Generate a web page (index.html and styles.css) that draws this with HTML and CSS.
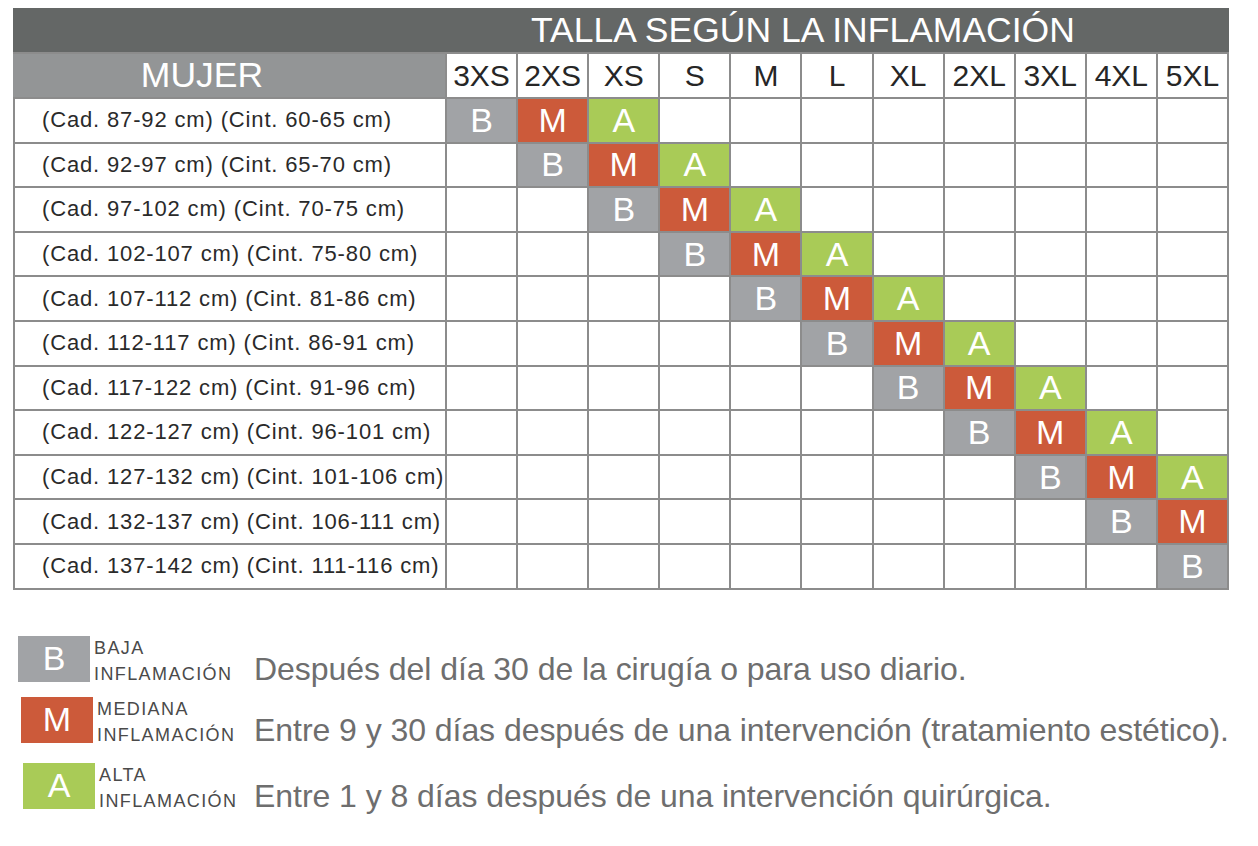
FILE: index.html
```html
<!DOCTYPE html>
<html lang="es">
<head>
<meta charset="utf-8">
<title>Talla según la inflamación</title>
<link rel="stylesheet" href="styles.css">
</head>
<body>
<div class="chart">
  <div class="title">TALLA SEGÚN LA INFLAMACIÓN</div>
  <div class="mujer">MUJER</div>
  <div class="size">3XS</div><div class="size">2XS</div><div class="size">XS</div><div class="size">S</div><div class="size">M</div><div class="size">L</div><div class="size">XL</div><div class="size">2XL</div><div class="size">3XL</div><div class="size">4XL</div><div class="size">5XL</div>

  <div class="label">(Cad. 87-92 cm) (Cint. 60-65 cm)</div>
  <div class="cell b">B</div><div class="cell m">M</div><div class="cell a">A</div><div class="cell"></div><div class="cell"></div><div class="cell"></div><div class="cell"></div><div class="cell"></div><div class="cell"></div><div class="cell"></div><div class="cell"></div>

  <div class="label">(Cad. 92-97 cm) (Cint. 65-70 cm)</div>
  <div class="cell"></div><div class="cell b">B</div><div class="cell m">M</div><div class="cell a">A</div><div class="cell"></div><div class="cell"></div><div class="cell"></div><div class="cell"></div><div class="cell"></div><div class="cell"></div><div class="cell"></div>

  <div class="label">(Cad. 97-102 cm) (Cint. 70-75 cm)</div>
  <div class="cell"></div><div class="cell"></div><div class="cell b">B</div><div class="cell m">M</div><div class="cell a">A</div><div class="cell"></div><div class="cell"></div><div class="cell"></div><div class="cell"></div><div class="cell"></div><div class="cell"></div>

  <div class="label">(Cad. 102-107 cm) (Cint. 75-80 cm)</div>
  <div class="cell"></div><div class="cell"></div><div class="cell"></div><div class="cell b">B</div><div class="cell m">M</div><div class="cell a">A</div><div class="cell"></div><div class="cell"></div><div class="cell"></div><div class="cell"></div><div class="cell"></div>

  <div class="label">(Cad. 107-112 cm) (Cint. 81-86 cm)</div>
  <div class="cell"></div><div class="cell"></div><div class="cell"></div><div class="cell"></div><div class="cell b">B</div><div class="cell m">M</div><div class="cell a">A</div><div class="cell"></div><div class="cell"></div><div class="cell"></div><div class="cell"></div>

  <div class="label">(Cad. 112-117 cm) (Cint. 86-91 cm)</div>
  <div class="cell"></div><div class="cell"></div><div class="cell"></div><div class="cell"></div><div class="cell"></div><div class="cell b">B</div><div class="cell m">M</div><div class="cell a">A</div><div class="cell"></div><div class="cell"></div><div class="cell"></div>

  <div class="label">(Cad. 117-122 cm) (Cint. 91-96 cm)</div>
  <div class="cell"></div><div class="cell"></div><div class="cell"></div><div class="cell"></div><div class="cell"></div><div class="cell"></div><div class="cell b">B</div><div class="cell m">M</div><div class="cell a">A</div><div class="cell"></div><div class="cell"></div>

  <div class="label">(Cad. 122-127 cm) (Cint. 96-101 cm)</div>
  <div class="cell"></div><div class="cell"></div><div class="cell"></div><div class="cell"></div><div class="cell"></div><div class="cell"></div><div class="cell"></div><div class="cell b">B</div><div class="cell m">M</div><div class="cell a">A</div><div class="cell"></div>

  <div class="label">(Cad. 127-132 cm) (Cint. 101-106 cm)</div>
  <div class="cell"></div><div class="cell"></div><div class="cell"></div><div class="cell"></div><div class="cell"></div><div class="cell"></div><div class="cell"></div><div class="cell"></div><div class="cell b">B</div><div class="cell m">M</div><div class="cell a">A</div>

  <div class="label">(Cad. 132-137 cm) (Cint. 106-111 cm)</div>
  <div class="cell"></div><div class="cell"></div><div class="cell"></div><div class="cell"></div><div class="cell"></div><div class="cell"></div><div class="cell"></div><div class="cell"></div><div class="cell"></div><div class="cell b">B</div><div class="cell m">M</div>

  <div class="label">(Cad. 137-142 cm) (Cint. 111-116 cm)</div>
  <div class="cell"></div><div class="cell"></div><div class="cell"></div><div class="cell"></div><div class="cell"></div><div class="cell"></div><div class="cell"></div><div class="cell"></div><div class="cell"></div><div class="cell"></div><div class="cell b">B</div>
</div>

<div class="legend">
  <div class="item item-b">
    <div class="swatch b">B</div>
    <div class="kind"><span class="k1">BAJA</span><span class="k2">INFLAMACIÓN</span></div>
    <div class="desc">Después del día 30 de la cirugía o para uso diario.</div>
  </div>
  <div class="item item-m">
    <div class="swatch m">M</div>
    <div class="kind"><span class="k1">MEDIANA</span><span class="k2">INFLAMACIÓN</span></div>
    <div class="desc">Entre 9 y 30 días después de una intervención (tratamiento estético).</div>
  </div>
  <div class="item item-a">
    <div class="swatch a">A</div>
    <div class="kind"><span class="k1">ALTA</span><span class="k2">INFLAMACIÓN</span></div>
    <div class="desc">Entre 1 y 8 días después de una intervención quirúrgica.</div>
  </div>
</div>
</body>
</html>
```

FILE: styles.css
```css
* { box-sizing: border-box; }

body {
  margin: 0;
  padding: 8px 0 40px 13px;
  background: #ffffff;
  font-family: "Liberation Sans", Arial, Helvetica, sans-serif;
  color: #2b2b2b;
}

.chart {
  width: 1216px;
  display: grid;
  grid-template-columns: 430px repeat(11, 1fr);
  grid-template-rows: 44px 43px repeat(11, 42.6px);
  gap: 2px;
  padding: 0 2px 2px 2px;
  background: #8c8c8c;
}

.title {
  grid-column: 1 / -1;
  margin: 0 -2px;
  background: #646766;
  color: #ffffff;
  font-size: 35.5px;
  line-height: 44px;
  padding-left: 518px;
  white-space: nowrap;
}

.mujer {
  margin-left: -2px;
  background: #939596;
  color: #ffffff;
  font-size: 35.5px;
  line-height: 43px;
  text-align: center;
  padding-right: 54px;
}

.size {
  background: #ffffff;
  color: #262626;
  font-size: 30px;
  line-height: 43px;
  text-align: center;
  white-space: nowrap;
}

.label {
  background: #ffffff;
  font-size: 22px;
  letter-spacing: 0.85px;
  color: #2a2a2a;
  display: flex;
  align-items: center;
  padding-left: 27px;
  white-space: nowrap;
}

.cell {
  background: #ffffff;
  color: #ffffff;
  font-size: 34px;
  display: flex;
  align-items: center;
  justify-content: center;
}

.b { background: #a1a3a6; }
.m { background: #cc5a3a; }
.a { background: #a9cb57; }

.legend {
  margin-top: 46px;
  display: flex;
  flex-direction: column;
  gap: 15px;
}

.item {
  display: flex;
  align-items: flex-end;
}

.item-b { margin-left: 5px; }
.item-m { margin-left: 8px; }
.item-a { margin-left: 10px; margin-top: 5px; }

.swatch {
  width: 72px;
  height: 46px;
  color: #ffffff;
  font-size: 34px;
  display: flex;
  align-items: center;
  justify-content: center;
  flex: none;
}

.kind {
  display: flex;
  flex-direction: column;
  margin-left: 4px;
  margin-bottom: -3px;
  color: #4a4a4a;
  font-size: 18px;
  letter-spacing: 1.4px;
  width: 160px;
  flex: none;
}

.item-m .kind { width: 157px; }
.item-a .kind { width: 155px; }

.k1 {
  line-height: 20px;
  margin-bottom: 5px;
}

.k2 {
  line-height: 22px;
}

.desc {
  color: #6e6e6e;
  font-size: 32px;
  line-height: 34px;
  margin-bottom: -4px;
  letter-spacing: -0.05px;
  white-space: nowrap;
}
```
